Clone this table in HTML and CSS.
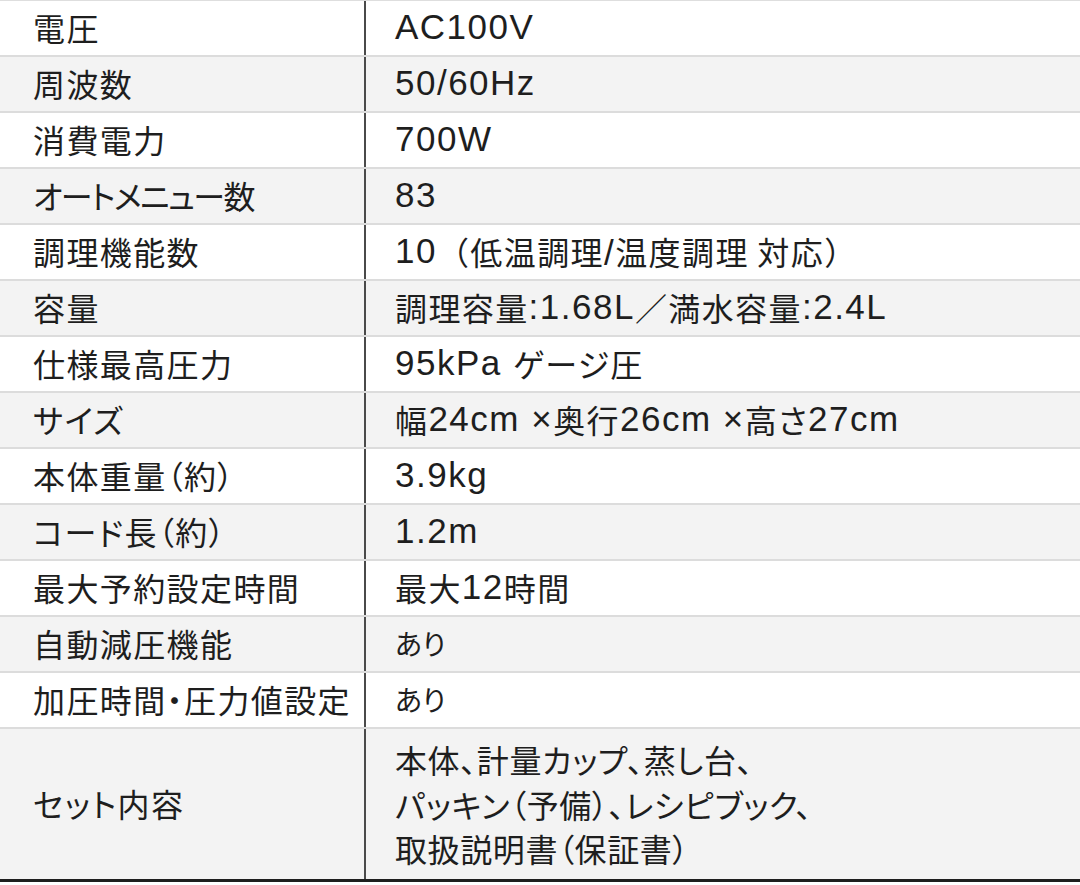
FILE: index.html
```html
<!DOCTYPE html>
<html lang="ja">
<head>
<meta charset="utf-8">
<title>仕様</title>
<link rel="stylesheet" href="styles.css">
</head>
<body>
<div class="spec">
  <div class="row"><div class="label">電圧</div><div class="value"><span class="en">AC100V</span></div></div>
  <div class="row"><div class="label">周波数</div><div class="value"><span class="en">50/60Hz</span></div></div>
  <div class="row"><div class="label">消費電力</div><div class="value"><span class="en">700W</span></div></div>
  <div class="row"><div class="label"><span class="kana">オートメニュー</span>数</div><div class="value"><span class="en">83</span></div></div>
  <div class="row"><div class="label">調理機能数</div><div class="value"><span class="en">10</span><span class="fw">（低温調理<span class="en">/</span>温度調理 対応）</span></div></div>
  <div class="row"><div class="label">容量</div><div class="value">調理容量<span class="en">:1.68L</span>／満水容量<span class="en">:2.4L</span></div></div>
  <div class="row"><div class="label">仕様最高圧力</div><div class="value"><span class="en">95kPa </span>ゲージ圧</div></div>
  <div class="row"><div class="label">サイズ</div><div class="value">幅<span class="en">24cm ×</span>奥行<span class="en">26cm ×</span>高さ<span class="en">27cm</span></div></div>
  <div class="row"><div class="label">本体重量（約）</div><div class="value"><span class="en">3.9kg</span></div></div>
  <div class="row"><div class="label">コード長（約）</div><div class="value"><span class="en">1.2m</span></div></div>
  <div class="row"><div class="label">最大予約設定時間</div><div class="value">最大<span class="en">12</span>時間</div></div>
  <div class="row"><div class="label">自動減圧機能</div><div class="value small">あり</div></div>
  <div class="row"><div class="label">加圧時間・圧力値設定</div><div class="value small">あり</div></div>
  <div class="row row-tall"><div class="label">セット内容</div><div class="value multi">本体、計量カップ、蒸し台、<br>パッキン（予備）、レシピブック、<br>取扱説明書（保証書）</div></div>
</div>
</body>
</html>
```

FILE: styles.css
```css
html, body {
  margin: 0;
  padding: 0;
  background: #ffffff;
}

.spec {
  width: 1080px;
  display: flex;
  flex-direction: column;
  border-top: 1px solid #dedede;
  border-bottom: 3px solid #1e1e1e;
  font-family: "Noto Sans CJK JP", "Liberation Sans", sans-serif;
  font-size: 32px;
  letter-spacing: 1.4px;
  color: #1e1e1e;
  font-feature-settings: "palt";
}

.row {
  display: grid;
  grid-template-columns: 366px 1fr;
  height: 54px;
  border-bottom: 2px solid #dcdcdc;
  background: #ffffff;
}

.row:nth-child(even) {
  background: #f3f3f3;
}

.row-tall {
  height: 150px;
  border-bottom: none;
}

.label {
  display: flex;
  align-items: center;
  padding-left: 33px;
  padding-bottom: 3px;
  border-right: 2px solid #4a4a4a;
  white-space: nowrap;
}

.kana {
  letter-spacing: -1.6px;
}

.value {
  display: flex;
  align-items: center;
  padding-left: 29px;
  padding-bottom: 3px;
  white-space: nowrap;
}

.fw {
  font-feature-settings: normal;
}

.value.small {
  font-size: 28px;
  letter-spacing: 0;
}

.value.multi {
  display: block;
  align-self: center;
  line-height: 44.5px;
  letter-spacing: 0.6px;
  padding-bottom: 0;
}

.en {
  font-family: "Liberation Sans", sans-serif;
  font-size: 35px;
  letter-spacing: 1.5px;
  white-space: pre;
}
```
